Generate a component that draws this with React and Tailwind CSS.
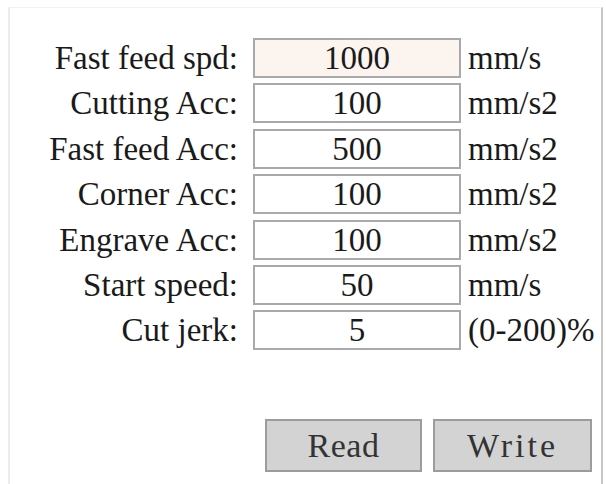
import React from 'react';

const rows = [
  { label: 'Fast feed spd:', value: '1000', unit: 'mm/s', active: true },
  { label: 'Cutting Acc:', value: '100', unit: 'mm/s2' },
  { label: 'Fast feed Acc:', value: '500', unit: 'mm/s2' },
  { label: 'Corner Acc:', value: '100', unit: 'mm/s2' },
  { label: 'Engrave Acc:', value: '100', unit: 'mm/s2' },
  { label: 'Start speed:', value: '50', unit: 'mm/s' },
  { label: 'Cut jerk:', value: '5', unit: '(0-200)%' },
];

const serif = { fontFamily: '"Liberation Serif", "Times New Roman", serif' };

export default function App() {
  return (
    <div className="w-[606px] h-[484px] bg-white overflow-hidden text-[#1a1a1a]" style={serif}>
      <div className="ml-[8px] mt-[7px] w-[595px] h-[490px] border-l-2 border-r-2 border-t border-l-[#ececec] border-r-[#c6c6c6] border-t-[#f3f3f3] pt-[30px]">
        <div className="flex flex-col gap-y-[5.4px]">
          {rows.map((r) => (
            <Row key={r.label} {...r} />
          ))}
        </div>

        <div className="flex gap-[11px] ml-[255px] mt-[69px]">
          <Button label="Read" width="w-[157px]" tracking="tracking-[0.5px]" />
          <Button label="Write" width="w-[159px]" tracking="tracking-[3px]" />
        </div>
      </div>
    </div>
  );
}

function Row({ label, value, unit, active }) {
  return (
    <div className="flex items-center h-[40px] text-[33px] leading-[40px]">
      <div className="w-[228px] text-right whitespace-nowrap">{label}</div>
      <div
        className={`ml-[15px] w-[208px] h-[40px] border-2 border-[#a9a9a9] text-center leading-[36px] ${
          active ? 'bg-[#fcf4ef]' : 'bg-white'
        }`}
      >
        {value}
      </div>
      <div className="ml-[7px] whitespace-nowrap">{unit}</div>
    </div>
  );
}

function Button({ label, width, tracking }) {
  return (
    <div
      className={`${width} ${tracking} h-[53px] bg-[#d3d3d3] border-2 border-[#9c9c9c] flex items-center justify-center text-[34px] text-[#333]`}
    >
      {label}
    </div>
  );
}
